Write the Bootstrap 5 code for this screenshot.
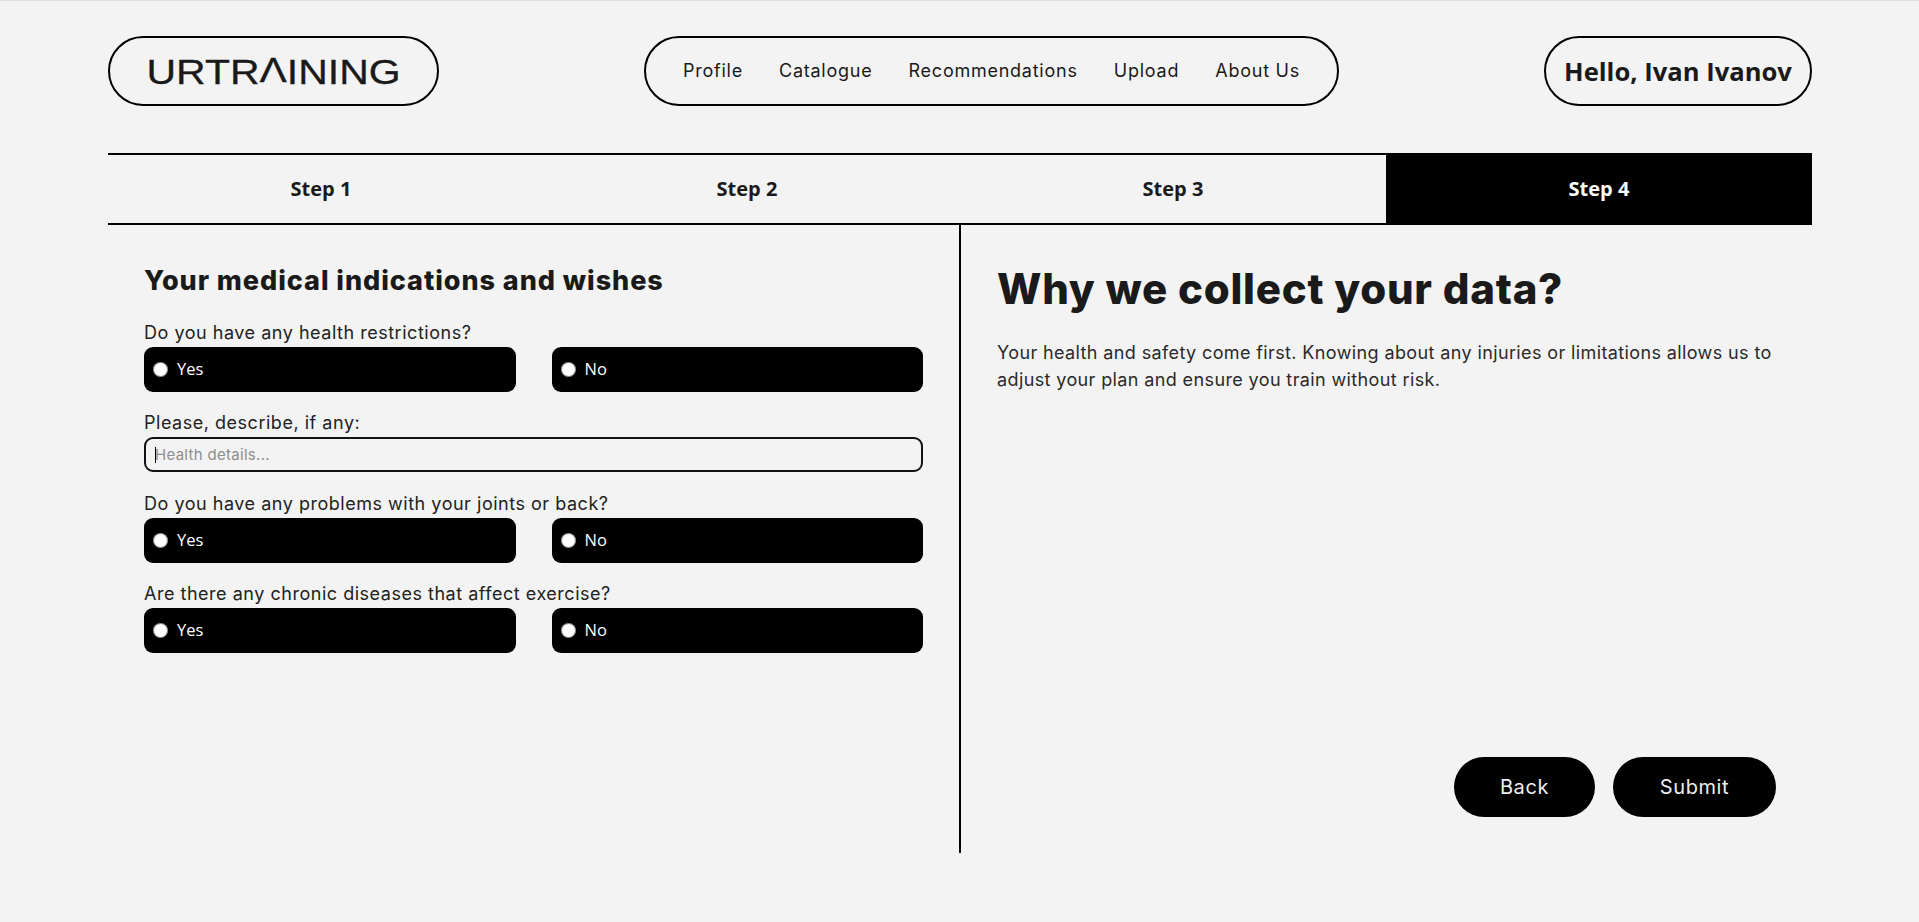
<!DOCTYPE html>
<html lang="en"><head><meta charset="utf-8"><title>UrTraining</title>
<link href="https://cdn.jsdelivr.net/npm/bootstrap@5.3.0/dist/css/bootstrap.min.css" rel="stylesheet">
<style>
body{background:#f3f3f3;color:#1a1a1a;font-family:Inter,sans-serif;border-top:1px solid #dedede}
.shell{width:1704px;margin-left:108px;padding-top:35px;padding-bottom:30px}
.pill{height:70px;border:2px solid #000;border-radius:35px}
.logo-pill{width:331px}
.logo-text{font-family:"Liberation Sans",sans-serif;font-size:35px;font-weight:400;letter-spacing:0;line-height:1;color:#1a1a1a;transform:scaleX(1.17);transform-origin:center;-webkit-text-stroke:.3px #1a1a1a}
.logo-a{position:relative;color:transparent;-webkit-text-stroke:0}
.logo-a::after{content:"Λ";position:absolute;left:0;top:0;color:#1a1a1a;-webkit-text-stroke:.3px #1a1a1a}
.nav-pill{width:695px;padding:0 37px}
.nav-link-x{font-size:18px;color:#1a1a1a;text-decoration:none;letter-spacing:.75px;line-height:1}
.hello-pill{width:268px;font-family:"Open Sans",sans-serif;font-weight:700;font-size:25.6px;color:#1a1a1a;padding-top:2px}
.steps{margin-top:47px;height:72px;border-top:2px solid #000;border-bottom:2px solid #000}
.step-cell{width:426px;font-family:"Open Sans",sans-serif;font-weight:700;font-size:20px}
.step-on{background:#000;color:#fff;margin:-2px 0}
.panes{height:628px}
.pane-left{width:853px;padding:39px 36px 0;border-right:2px solid #000}
.pane-right{width:851px;padding:39px 36px 36px}
.h-left{font-weight:800;font-size:27px;letter-spacing:.95px;line-height:34px;margin:0 0 25px}
.h-right{font-weight:800;font-size:42px;letter-spacing:.75px;line-height:50px;margin:0 0 25px}
.q-label{font-size:18px;letter-spacing:.52px;line-height:20px;display:block;margin-bottom:4px;color:#222}
.choice-row{gap:36px;margin-bottom:21px}
.choice{flex:1 1 0;height:45px;background:#000;color:#fff;border-radius:9px;padding-left:9px;gap:9px;font-family:"Open Sans",sans-serif;font-size:16.5px;margin:0}
.choice input{width:15px;height:15px;margin:0;flex:none}
.field-wrap{margin-bottom:22px}
.txt{display:block;width:100%;height:35px;border:2px solid #111;border-radius:9px;background:transparent;font-size:15px;padding:0 9px;font-family:Inter,sans-serif;outline:none;letter-spacing:.3px;caret-color:transparent}
.txt::placeholder{color:#8f8f8f;opacity:1}
.fake-caret{position:absolute;left:11px;top:10px;width:1px;height:16px;background:#000}
.para{font-size:18px;line-height:27px;letter-spacing:.38px;margin:0;color:#2a2a2a}
.act-row{gap:18px}
.act{height:60px;border-radius:30px;background:#000;color:#eee;font-size:20px;border:0;letter-spacing:.6px}
.act-back{width:141px}.act-sub{width:163px}
</style></head><body>
<div class="shell">
 <header class="d-flex justify-content-between">
  <div class="pill logo-pill d-flex align-items-center justify-content-center"><span class="logo-text">URTR<span class="logo-a">A</span>INING</span></div>
  <nav class="pill nav-pill d-flex align-items-center justify-content-between">
   <a class="nav-link-x" href="#">Profile</a><a class="nav-link-x" href="#">Catalogue</a><a class="nav-link-x" href="#">Recommendations</a><a class="nav-link-x" href="#">Upload</a><a class="nav-link-x" href="#">About Us</a>
  </nav>
  <div class="pill hello-pill d-flex align-items-center justify-content-center">Hello, Ivan Ivanov</div>
 </header>
 <div class="steps d-flex">
  <div class="step-cell d-flex align-items-center justify-content-center">Step 1</div>
  <div class="step-cell d-flex align-items-center justify-content-center">Step 2</div>
  <div class="step-cell d-flex align-items-center justify-content-center">Step 3</div>
  <div class="step-cell step-on d-flex align-items-center justify-content-center">Step 4</div>
 </div>
 <div class="panes d-flex">
  <section class="pane-left">
   <h2 class="h-left">Your medical indications and wishes</h2>
   <span class="q-label">Do you have any health restrictions?</span>
   <div class="choice-row d-flex">
    <label class="choice d-flex align-items-center"><input type="radio" name="a">Yes</label>
    <label class="choice d-flex align-items-center"><input type="radio" name="a">No</label>
   </div>
   <span class="q-label">Please, describe, if any:</span>
   <div class="field-wrap position-relative"><input class="txt" type="text" placeholder="Health details..."><span class="fake-caret"></span></div>
   <span class="q-label">Do you have any problems with your joints or back?</span>
   <div class="choice-row d-flex">
    <label class="choice d-flex align-items-center"><input type="radio" name="b">Yes</label>
    <label class="choice d-flex align-items-center"><input type="radio" name="b">No</label>
   </div>
   <span class="q-label">Are there any chronic diseases that affect exercise?</span>
   <div class="choice-row d-flex">
    <label class="choice d-flex align-items-center"><input type="radio" name="c">Yes</label>
    <label class="choice d-flex align-items-center"><input type="radio" name="c">No</label>
   </div>
  </section>
  <section class="pane-right d-flex flex-column">
   <h1 class="h-right">Why we collect your data?</h1>
   <p class="para">Your health and safety come first. Knowing about any injuries or limitations allows us to adjust your plan and ensure you train without risk.</p>
   <div class="act-row d-flex justify-content-end mt-auto"><button class="act act-back">Back</button><button class="act act-sub">Submit</button></div>
  </section>
 </div>
</div>
<script src="https://cdn.jsdelivr.net/npm/bootstrap@5.3.0/dist/js/bootstrap.bundle.min.js"></script>
</body></html>
